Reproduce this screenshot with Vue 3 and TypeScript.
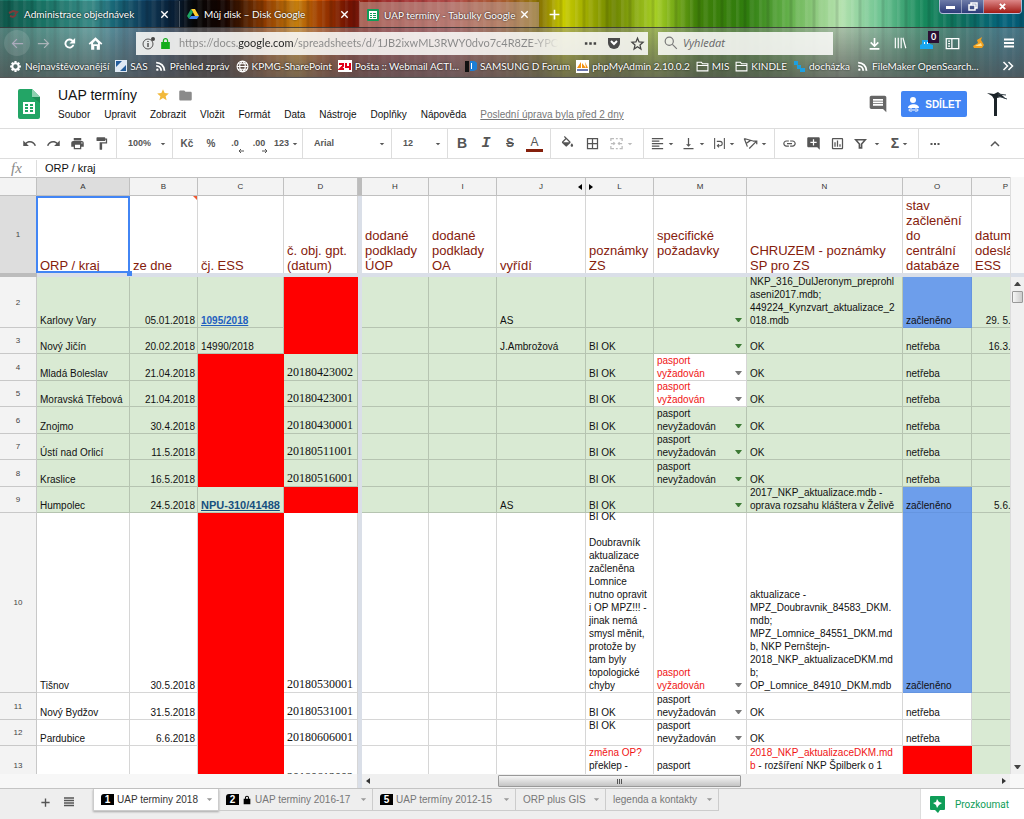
<script setup lang="ts">
import { h, ref } from 'vue'
import type { FunctionalComponent } from 'vue'

const fills: Record<string, string> = {
  undo: 'M12.5 8c-2.65 0-5.05.99-6.9 2.6L2 7v9h9l-3.62-3.62c1.39-1.16 3.16-1.88 5.12-1.88 3.54 0 6.55 2.31 7.6 5.5l2.37-.78C21.08 11.03 17.15 8 12.5 8z',
  redo: 'M18.4 10.6C16.55 8.99 14.15 8 11.5 8c-4.65 0-8.58 3.03-9.96 7.22L3.9 16c1.05-3.19 4.05-5.5 7.6-5.5 1.95 0 3.73.72 5.12 1.88L13 16h9V7l-3.6 3.6z',
  print: 'M19 8H5c-1.66 0-3 1.34-3 3v6h4v4h12v-4h4v-6c0-1.66-1.34-3-3-3zm-3 11H8v-5h8v5zm3-7c-.55 0-1-.45-1-1s.45-1 1-1 1 .45 1 1-.45 1-1 1zm-1-9H6v4h12V3z',
  paint: 'M18 4V3c0-.55-.45-1-1-1H5c-.55 0-1 .45-1 1v4c0 .55.45 1 1 1h12c.55 0 1-.45 1-1V6h1v4H9v11c0 .55.45 1 1 1h2c.55 0 1-.45 1-1v-9h8V4h-3z',
  fill: 'M16.56 8.94L7.62 0 6.21 1.41l2.38 2.38-5.15 5.15c-.59.59-.59 1.54 0 2.12l5.5 5.5c.29.29.68.44 1.06.44s.77-.15 1.06-.44l5.5-5.5c.59-.58.59-1.53 0-2.12zM19 11.5s-2 2.17-2 3.5c0 1.1.9 2 2 2s2-.9 2-2c0-1.33-2-3.5-2-3.5zM5.21 10L10 5.21 14.79 10H5.21z',
  borders: 'M3 3v18h18V3H3zm8 16H5v-6h6v6zm0-8H5V5h6v6zm8 8h-6v-6h6v6zm0-8h-6V5h6v6z',
  left: 'M15 15H3v2h12v-2zm0-8H3v2h12V7zM3 13h18v-2H3v2zm0 8h18v-2H3v2zM3 3v2h18V3H3z',
  bottom: 'M16 13h-3V3h-2v10H8l4 4 4-4zM4 19v2h16v-2H4z',
  link: 'M3.9 12c0-1.71 1.39-3.1 3.1-3.1h4V7H7c-2.76 0-5 2.24-5 5s2.24 5 5 5h4v-1.9H7c-1.71 0-3.1-1.39-3.1-3.1zM8 13h8v-2H8v2zm9-6h-4v1.9h4c1.71 0 3.1 1.39 3.1 3.1s-1.39 3.1-3.1 3.1h-4V17h4c2.76 0 5-2.24 5-5s-2.24-5-5-5z',
  addNote: 'M22 4c0-1.1-.9-2-2-2H4c-1.1 0-2 .9-2 2v12c0 1.1.9 2 2 2h14l4 4V4zm-5 7h-4v4h-2v-4H7V9h4V5h2v4h4v2z',
  chart: 'M9 17H7v-7h2v7zm4 0h-2V7h2v10zm4 0h-2v-4h2v4zm2 2H5V5h14v14zm0-16H5c-1.1 0-2 .9-2 2v14c0 1.1.9 2 2 2h14c1.1 0 2-.9 2-2V5c0-1.1-.9-2-2-2z',
  more: 'M3 10h4v4H3zM10 10h4v4h-4zM17 10h4v4h-4z',
  comment: 'M22 4c0-1.1-.89-2-2-2H4c-1.1 0-2 .9-2 2v12c0 1.1.9 2 2 2h14l4 4V4zM18 14H6v-2h12v2zm0-3H6V9h12v2zm0-3H6V6h12v2z',
  star: 'M12 17.27L18.18 21l-1.64-7.03L22 9.24l-7.19-.61L12 2 9.19 8.63 2 9.24l5.46 4.73L5.82 21z',
  folder: 'M10 4H4c-1.1 0-2 .9-2 2v12c0 1.1.9 2 2 2h16c1.1 0 2-.9 2-2V8c0-1.1-.9-2-2-2h-8l-2-2z',
  rss: 'M6.2 15.6a2.2 2.2 0 1 1 0 4.4 2.2 2.2 0 0 1 0-4.4M4 3A17 17 0 0 1 21 20h-3.4A13.6 13.6 0 0 0 4 6.4V3m0 6a11 11 0 0 1 11 11h-3.4A7.6 7.6 0 0 0 4 12.4V9z',
  lock: 'M18 9h-1V7c0-2.76-2.24-5-5-5S7 4.24 7 7v2H4v13h16V9zM9.3 7a2.7 2.7 0 0 1 5.4 0v2H9.3z',
  reload: 'M17.65 6.35A8 8 0 1 0 19.73 14h-3.1A5 5 0 1 1 15.5 8.5L12 12h9V3z',
  home: 'M12 2L1 12l2 2 2-2v10h5v-6h4v6h5V12l2 2 2-2zM12 7l4 4v8h0v-6H8v6h0v-8z',
  caret: 'M3 8h18l-9 9z',
}
const strokes: Record<string, string> = {
  merge: 'M3 8V4h5M11 4h3M17 4h4v4M3 16v4h5M11 20h3M17 20h4v-4M3 12h6M15 12h6M7 10l2 2-2 2M17 10l-2 2 2 2',
  wrap: 'M3 2v20M21 2v20M7 8h6a4 4 0 0 1 0 8H8M11 13l-3 3 3 3',
  rotate: 'M2 4l14 4M2 4l5 13M12 7l-7 5M10 20L21 9M16 8h6v5',
  filter: 'M3 5h18l-7 8v7h-4v-7z',
  up: 'M4 16l8-8 8 8',
  close: 'M5 5l14 14M19 5L5 19',
  plus: 'M12 3v18M3 12h18',
  back: 'M21 12H4M11 5l-7 7 7 7',
  forward: 'M3 12h17M13 5l7 7-7 7',
  download: 'M12 2v15M5 10l7 7 7-7M3 22h18',
  library: 'M4 3v18M9 3v18M14 3v18M17 3l5 18',
  sidebar: 'M2 4h20v16H2zM11 4v16M5 8h3M5 12h3M5 16h3',
  menu: 'M2 5h20M2 12h20M2 19h20',
  starOutline: 'M12 17.300L17.500 21l-1.500-6.500L21 10l-6.500-.6L12 3.500 9.500 9.400 3 10l5 4.500L6.500 21z',
  folderOutline: 'M2 20V4h8l2 3h10v13zM2 10h20',
  globe: 'M12 2a10 10 0 1 0 0 20 10 10 0 0 0 0-20M2 12h20M12 2c-7 5-7 15 0 20M12 2c7 5 7 15 0 20M4 7h16M4 17h16',
  search: 'M9 2a7 7 0 1 0 0 14A7 7 0 0 0 9 2M14 14l8 8',
  chevrons: 'M3 4l8 8-8 8M13 4l8 8-8 8',
  gear: 'M12 6a6 6 0 1 0 0 12 6 6 0 0 0 0-12M12 2v4M12 18v4M2 12h4M18 12h4M5 5l3 3M16 16l3 3M19 5l-3 3M8 16l-3 3',
  list: 'M2 4h20M2 9h20M2 14h20M2 19h20',
}

const Icon: FunctionalComponent<{ name: string; size?: number; weight?: number }> = (props) => {
  const size = props.size ?? 15
  const stroked = props.name in strokes
  return h('svg', { width: size, height: size, viewBox: '0 0 24 24', 'aria-hidden': 'true' }, [
    h('path', stroked
      ? { d: strokes[props.name], fill: 'none', stroke: 'currentColor', 'stroke-width': props.weight ?? 2 }
      : { d: fills[props.name], fill: 'currentColor', 'fill-rule': 'evenodd' }),
  ])
}
Icon.props = ['name', 'size', 'weight']

const url = ref('https://docs.google.com/spreadsheets/d/1JB2ixwML3RWY0dvo7c4R8ZE-YPC')
const query = ref('')
const formula = ref('ORP / kraj')
const zoomLevel = ref('100%')
const family = ref('Arial')
const fontSize = ref('12')

const bookmarks = [
  { icon: 'gear', label: 'Nejnavštěvovanější' },
  { icon: 'sas', label: 'SAS' },
  { icon: 'rss', label: 'Přehled zpráv' },
  { icon: 'globe', label: 'KPMG-SharePoint' },
  { icon: 'mail', label: 'Pošta :: Webmail ACTI...' },
  { icon: 'forum', label: 'SAMSUNG D Forum' },
  { icon: 'pma', label: 'phpMyAdmin 2.10.0.2' },
  { icon: 'folderOutline', label: 'MIS' },
  { icon: 'folderOutline', label: 'KINDLE' },
  { icon: 'steps', label: 'docházka' },
  { icon: 'rss', label: 'FileMaker OpenSearch...' },
]
const menus = ['Soubor', 'Upravit', 'Zobrazit', 'Vložit', 'Formát', 'Data', 'Nástroje', 'Doplňky', 'Nápověda']

const columns = ['A', 'B', 'C', 'D', '', 'H', 'I', 'J', 'L', 'M', 'N', 'O', 'P']
const headings = [
  'ORP / kraj', 'ze dne', 'čj. ESS', 'č. obj. gpt.\n(datum)', '', 'dodané\npodklady\nÚOP', 'dodané\npodklady\nOA',
  'vyřídí', 'poznámky\nZS', 'specifické\npožadavky\n ', 'CHRUZEM - poznámky\nSP pro ZS',
  'stav\nzačlenění\ndo\ncentrální\ndatabáze', 'datum\nodeslání\nESS',
]

interface Row {
  n: number
  height: number
  town?: string
  date?: string
  ref?: string
  order?: string
  who?: string
  note?: string
  need?: string
  text: string
  lead?: string
  state?: string
  sent?: string
}
const no = 'pasport\nnevyžadován'
const yes = 'pasport\nvyžadován'
const rows: Row[] = [
  { n: 2, height: 51, town: 'Karlovy Vary', date: '05.01.2018', ref: '1095/2018', who: 'AS', text: 'NKP_316_DulJeronym_preprohl\naseni2017.mdb;\n449224_Kynzvart_aktualizace_2\n018.mdb', state: 'začleněno', sent: '29. 5.2018' },
  { n: 3, height: 26, town: 'Nový Jičín', date: '20.02.2018', ref: '14990/2018', who: 'J.Ambrožová', note: 'BI OK', text: 'OK', state: 'netřeba', sent: '16.3.2018' },
  { n: 4, height: 27, town: 'Mladá Boleslav', date: '21.04.2018', order: '20180423002', note: 'BI OK', need: yes, text: 'OK', state: 'netřeba' },
  { n: 5, height: 26, town: 'Moravská Třebová', date: '21.04.2018', order: '20180423001', note: 'BI OK', need: yes, text: 'OK', state: 'netřeba' },
  { n: 6, height: 27, town: 'Znojmo', date: '30.4.2018', order: '20180430001', note: 'BI OK', need: no, text: 'OK', state: 'netřeba' },
  { n: 7, height: 26, town: 'Ústí nad Orlicí', date: '11.5.2018', order: '20180511001', note: 'BI OK', need: no, text: 'OK', state: 'netřeba' },
  { n: 8, height: 27, town: 'Kraslice', date: '16.5.2018', order: '20180516001', note: 'BI OK', need: no, text: 'OK', state: 'netřeba' },
  { n: 9, height: 26, town: 'Humpolec', date: '24.5.2018', ref: 'NPU-310/41488', who: 'AS', note: 'BI OK', text: '2017_NKP_aktualizace.mdb -\noprava rozsahu kláštera v Želivě', state: 'začleněno', sent: '5.6.2018' },
  { n: 10, height: 180, town: 'Tišnov', date: '30.5.2018', order: '20180530001', note: 'BI OK\n \nDoubravník\naktualizace\nzačleněna\nLomnice\nnutno opravit\ni OP MPZ!!! -\njinak nemá\nsmysl měnit,\nprotože by\ntam byly\ntopologické\nchyby', need: yes, text: 'aktualizace -\nMPZ_Doubravnik_84583_DKM.\nmdb;\nMPZ_Lomnice_84551_DKM.md\nb, NKP Pernštejn-\n2018_NKP_aktualizaceDKM.md\nb;\nOP_Lomnice_84910_DKM.mdb', state: 'začleněno' },
  { n: 11, height: 27, town: 'Nový Bydžov', date: '31.5.2018', order: '20180531001', note: 'BI OK', need: no, text: 'OK', state: 'netřeba' },
  { n: 12, height: 26, town: 'Pardubice', date: '6.6.2018', order: '20180606001', note: 'BI OK\n ', need: no, text: 'OK', state: 'netřeba' },
  { n: 13, height: 40, order: '20180612002', lead: 'změna OP?', note: 'překlep -\n ', need: 'pasport\n ', text: ' - rozšíření NKP Špilberk o 1\n ' },
]
const isLink = (r: Row) => r.n === 2 || r.n === 9

const sheets = [
  { badge: '1', label: 'UAP terminy 2018', cls: 'tab-1' },
  { badge: '2', label: 'UAP terminy 2016-17', cls: 'tab-2', locked: true },
  { badge: '5', label: 'UAP termíny 2012-15', cls: 'tab-3' },
  { label: 'ORP plus GIS', cls: 'tab-4' },
  { label: 'legenda a kontakty', cls: 'tab-5' },
]
</script>

<template>
  <div class="app">
    <header class="browser">
      <div class="strip">
        <div class="btab dim">
          <svg class="fav" viewBox="0 0 12 12"><path d="M2 5l4-2 4 1-2 2M3 8l3 1 3-2" fill="none" stroke="#7d3a3a" stroke-width="2" /></svg>
          <span>Administrace objednávek</span>
          <button aria-label="Zavřít"><Icon name="close" :size="11" :weight="3" /></button>
        </div>
        <div class="btab drive">
          <svg class="fav" viewBox="0 0 12 12"><path d="M4 1h4l4 7H8z" fill="#fc3" /><path d="M4 1L0 8l2 3 4-7z" fill="#1da462" /><path d="M2 11l2-3h8l-2 3z" fill="#4587f4" /></svg>
          <span>Můj disk – Disk Google</span>
          <button aria-label="Zavřít"><Icon name="close" :size="11" :weight="3" /></button>
        </div>
        <div class="btab active">
          <svg class="fav" viewBox="0 0 12 12"><rect width="12" height="12" rx="1" fill="#0f9d58" /><path d="M2 2h8v8H2zM3 4v1h2V4zM6 4v1h3V4zM3 6v1h2V6zM6 6v1h3V6zM3 8v1h2V8zM6 8v1h3V8z" fill="#fff" fill-rule="evenodd" /></svg>
          <span>UAP termíny - Tabulky Google</span>
          <button aria-label="Zavřít"><Icon name="close" :size="11" :weight="3" /></button>
        </div>
        <button class="newtab" aria-label="Nový panel"><Icon name="plus" :size="13" :weight="3" /></button>
        <div class="winctl">
          <button aria-label="Minimalizovat"><svg width="10" height="8"><rect x="0" y="3" width="9" height="3" fill="#fff" /></svg></button>
          <button aria-label="Obnovit"><svg width="10" height="9"><path d="M3 3V1h6v5H7M1 3h6v5H1z" fill="none" stroke="#fff" stroke-width="1.500" /></svg></button>
          <button class="x" aria-label="Zavřít okno"><Icon name="close" :size="9" :weight="5" /></button>
        </div>
      </div>
      <div class="chrome">
        <div class="nav">
          <button class="round" aria-label="Zpět"><Icon name="back" :size="15" /></button>
          <button class="faded" aria-label="Vpřed"><Icon name="forward" :size="15" /></button>
          <button aria-label="Obnovit stránku"><Icon name="reload" :size="15" /></button>
          <button aria-label="Domů"><Icon name="home" :size="15" /></button>
          <label class="urlbox">
            <svg width="13" height="13" viewBox="0 0 13 13"><circle cx="6" cy="7" r="5" fill="none" stroke="#555" /><path d="M6 6v4M6 4v1" stroke="#555" stroke-width="1.500" /><circle cx="11" cy="2" r="2" fill="#444" /></svg>
            <Icon class="green" name="lock" :size="13" />
            <input v-model="url" aria-label="Adresa">
            <Icon name="more" :size="15" />
            <svg width="14" height="13" viewBox="0 0 14 13"><path d="M1 1h12v5a6 6 0 0 1-12 0z" fill="#4a4a4a" /><path d="M4 4l3 3 3-3" fill="none" stroke="#fff" stroke-width="2" /></svg>
            <Icon name="starOutline" :size="15" />
          </label>
          <label class="searchbox">
            <Icon name="search" :size="14" />
            <input v-model="query" placeholder="Vyhledat" aria-label="Vyhledat">
          </label>
          <div class="tools">
            <button aria-label="Stahování"><Icon name="download" :size="13" :weight="3" /></button>
            <button aria-label="Knihovna"><Icon name="library" :size="14" :weight="2" /></button>
            <button class="ghost" aria-label="Doplněk"><svg width="13" height="11" viewBox="0 0 13 11"><path d="M0 11V7l2-1V2h8v4l3 1v4z" fill="#19a7f0" /><path d="M4 4h1v2H4zM7 4h1v2H7z" fill="#fff" /></svg><span class="count">0</span></button>
            <button aria-label="Postranní lišta"><Icon name="sidebar" :size="15" /></button>
            <button aria-label="Přepínač proxy"><svg width="13" height="12" viewBox="0 0 13 12"><path d="M1 9l5-3-1-3 5-3-1 3 3 5-2 3H2z" fill="#f0a020" /><path d="M3 9l6-3 1 3z" fill="#ffe08a" /></svg></button>
            <button aria-label="Nabídka"><Icon name="menu" :size="12" :weight="4" /></button>
          </div>
        </div>
        <nav class="bookmarks">
          <a v-for="b in bookmarks" :key="b.label" href="#">
            <svg v-if="b.icon === 'sas'" width="12" height="12"><rect width="12" height="12" fill="#dfeaf5" /><path d="M1 1h6L1 7zM11 5v6H5z" fill="#235d9b" /></svg>
            <svg v-else-if="b.icon === 'mail'" width="14" height="12"><rect width="14" height="12" fill="#fff" /><path d="M1 4h4v2L2 9h4M8 3v4h4M12 3v7" fill="none" stroke="#e2001a" stroke-width="2" /></svg>
            <svg v-else-if="b.icon === 'forum'" width="12" height="12"><rect width="4" height="12" y="1" fill="#111" /><path d="M5 1h3a5 5 0 0 1 0 10H5z" fill="#1c7ed6" /><path d="M6 3h1v6H6z" fill="#fff" /></svg>
            <svg v-else-if="b.icon === 'pma'" width="13" height="13"><rect width="13" height="13" fill="#fff" /><path d="M1 8l4-6v6zM6 8V3l4 5zM9 2l3 6h-2z" fill="#f29111" /><path d="M1 10h11" stroke="#6c78af" stroke-width="2" /></svg>
            <svg v-else-if="b.icon === 'steps'" width="13" height="13"><path d="M1 1h4v4h3v3h4v4H7V9H4V5H1z" fill="#1d9fe0" /></svg>
            <Icon v-else :name="b.icon" :size="13" :weight="b.icon === 'gear' ? 4 : 2" />
            <span>{{ b.label }}</span>
          </a>
          <button class="overflow" aria-label="Další záložky"><Icon name="chevrons" :size="12" :weight="3" /></button>
        </nav>
      </div>
    </header>

    <section class="dochead">
      <svg class="logo" width="22" height="30" viewBox="0 0 22 30"><path d="M2 0h12l8 8v20a2 2 0 0 1-2 2H2a2 2 0 0 1-2-2V2a2 2 0 0 1 2-2z" fill="#23a566" /><path d="M14 0l8 8h-8z" fill="#8ed1b1" /><path d="M14 8h8v6z" fill="#1c8f57" /><path d="M5 13h12v12H5zM7 15v2h3v-2zM12 15v2h3v-2zM7 18v2h3v-2zM12 18v2h3v-2zM7 21v2h3v-2zM12 21v2h3v-2z" fill="#fff" fill-rule="evenodd" /></svg>
      <div class="titles">
        <div class="titleline">
          <h1>UAP termíny</h1>
          <button class="fav-star" aria-label="Hvězdička"><Icon name="star" :size="14" /></button>
          <button class="fav-folder" aria-label="Přesunout"><Icon name="folder" :size="15" /></button>
        </div>
        <nav class="menus">
          <button v-for="m in menus" :key="m">{{ m }}</button>
          <a href="#">Poslední úprava byla před 2 dny</a>
        </nav>
      </div>
      <button class="comments" aria-label="Komentáře"><Icon name="comment" :size="20" /></button>
      <button class="share">
        <svg width="13" height="15" viewBox="0 0 13 15"><circle cx="6" cy="3" r="3" fill="#fff" /><path d="M1 11c0-5 11-5 11 0z" fill="#fff" /><path d="M5 12H3a1 1 0 0 0 0 2h2M8 12h2a1 1 0 0 1 0 2H8M5 13h3" fill="none" stroke="#fff" /></svg>
        SDÍLET
      </button>
      <svg class="avatar" width="22" height="26" viewBox="0 0 22 26"><path d="M1 2l7 1 4-2 5 4 3 3-5-2-4 1v18H8V8L6 5z" fill="#1c2429" /><path d="M12 3l8 1M12 5l9 3" stroke="#39454c" /></svg>
    </section>

    <section class="toolbar" aria-label="Panel nástrojů">
      <div class="group g1">
        <button aria-label="Zpět"><Icon name="undo" /></button>
        <button aria-label="Znovu"><Icon name="redo" /></button>
        <button aria-label="Tisk"><Icon name="print" /></button>
        <button aria-label="Kopírovat formát"><Icon name="paint" /></button>
      </div>
      <div class="group g2 pick"><select v-model="zoomLevel" aria-label="Lupa"><option>100%</option></select><Icon name="caret" :size="6" /></div>
      <div class="group g3">
        <button>Kč</button><button>%</button>
        <button class="dec">.0<svg width="6" height="4"><path d="M6 2H1M3 0L1 2l2 2" fill="none" stroke="#555" /></svg></button>
        <button class="dec">.00<svg width="6" height="4"><path d="M0 2h5M3 0l2 2-2 2" fill="none" stroke="#555" /></svg></button>
        <button class="num">123<Icon name="caret" :size="6" /></button>
      </div>
      <div class="group g4 pick"><select v-model="family" aria-label="Písmo"><option>Arial</option></select><Icon name="caret" :size="6" /></div>
      <div class="group g5 pick"><select v-model="fontSize" aria-label="Velikost písma"><option>12</option></select><Icon name="caret" :size="6" /></div>
      <div class="group g6">
        <button class="glyph">B</button><button class="glyph it">I</button><button class="glyph st">S</button><button class="glyph col">A</button>
      </div>
      <div class="group g7">
        <button aria-label="Barva výplně"><Icon name="fill" /></button>
        <button aria-label="Ohraničení"><Icon name="borders" /></button>
        <button class="off drop" aria-label="Sloučit buňky"><Icon name="merge" /><Icon name="caret" :size="6" /></button>
      </div>
      <div class="group g8">
        <button class="drop" aria-label="Vodorovné zarovnání"><Icon name="left" /><Icon name="caret" :size="6" /></button>
        <button class="drop" aria-label="Svislé zarovnání"><Icon name="bottom" /><Icon name="caret" :size="6" /></button>
        <button class="drop" aria-label="Zalamování textu"><Icon name="wrap" :size="13" /><Icon name="caret" :size="6" /></button>
        <button class="drop" aria-label="Otočení textu"><Icon name="rotate" /><Icon name="caret" :size="6" /></button>
      </div>
      <div class="group g9">
        <button aria-label="Odkaz"><Icon name="link" /></button>
        <button aria-label="Komentář"><Icon name="addNote" /></button>
        <button aria-label="Graf"><Icon name="chart" /></button>
        <button class="drop wide" aria-label="Filtr"><Icon name="filter" :size="13" :weight="3" /><Icon name="caret" :size="6" /></button>
        <button class="drop glyph" aria-label="Funkce"><span>Σ</span><Icon name="caret" :size="6" /></button>
      </div>
      <div class="group g10"><button aria-label="Více"><Icon name="more" :size="12" /></button></div>
      <button class="collapse" aria-label="Skrýt nabídky"><Icon name="up" :size="12" :weight="3" /></button>
    </section>

    <label class="fx"><span>fx</span><input v-model="formula" aria-label="Vzorec"></label>

    <main class="sheet">
      <div class="view">
        <table>
          <colgroup>
            <col class="wh"><col class="wa"><col class="wb"><col class="wc"><col class="wd"><col class="wf"><col class="wi"><col class="wb"><col class="wj"><col class="wb"><col class="wa"><col class="wn"><col class="wo"><col>
          </colgroup>
          <thead>
            <tr class="letters">
              <td class="corner"></td>
              <th v-for="(c, i) in columns" :key="i" :class="{ sel: c === 'A', split: c === '' }" scope="col">
                {{ c }}
                <button v-if="c === 'J'" class="hid right" aria-label="Zobrazit sloupec K"><svg width="4" height="6"><path d="M4 0v6L0 3z" /></svg></button>
                <button v-if="c === 'L'" class="hid left" aria-label="Zobrazit sloupec K"><svg width="4" height="6"><path d="M0 0v6l4-3z" /></svg></button>
              </th>
            </tr>
            <tr class="heads">
              <th class="rownum sel" scope="row">1</th>
              <td v-for="(t, i) in headings" :key="i" :class="{ split: i === 4, picked: i === 0, noted: i === 1 }"><div class="cell">{{ t }}</div></td>
            </tr>
            <tr class="freeze"><td class="corner-dark"></td><td :colspan="13"></td></tr>
          </thead>
          <tbody>
            <tr v-for="r in rows" :key="r.n" :class="{ green: r.n < 10 }" :style="{ '--h': r.height + 'px' }">
              <th class="rownum" scope="row">{{ r.n }}</th>
              <td><div class="cell">{{ r.town }}</div></td>
              <td><div class="cell end">{{ r.date }}</div></td>
              <td :class="{ red: !r.ref }"><div class="cell"><a v-if="isLink(r)" href="#" :class="{ big: r.n === 9 }">{{ r.ref }}</a><span v-else>{{ r.ref }}</span></div></td>
              <td :class="{ red: !r.order }"><div class="cell serif">{{ r.order }}</div></td>
              <td class="split"></td>
              <td></td>
              <td></td>
              <td><div class="cell">{{ r.who }}</div></td>
              <td><div class="cell"><span v-if="r.lead" class="warn">{{ r.lead }}</span><span>{{ r.note }}</span></div></td>
              <td :class="{ plain: r.n === 4 || r.n === 5 }">
                <div class="cell" :class="{ warn: r.need === yes }">{{ r.need }}</div>
                <button v-if="r.n < 13" class="choose" aria-label="Vybrat hodnotu"><svg width="7" height="4"><path d="M0 0h7L4 4H3z" fill="currentColor" /></svg></button>
              </td>
              <td>
                <div v-if="r.n === 13" class="cell"><span class="warn">2018_NKP_aktualizaceDKM.md</span><div class="mixed"><span class="warn">b</span><span>{{ r.text }}</span></div></div>
                <div v-else class="cell">{{ r.text }}</div>
              </td>
              <td :class="{ blue: r.state === 'začleněno', red: !r.state }"><div class="cell">{{ r.state }}</div></td>
              <td class="sent"><div class="cell end">{{ r.sent }}</div></td>
            </tr>
          </tbody>
        </table>
      </div>
      <div class="rail">
        <div class="vbar">
          <svg width="7" height="4"><path d="M0 4h7L4 0H3z" fill="#444" /></svg>
          <span class="vthumb"></span>
          <svg class="down" width="7" height="4"><path d="M0 0h7L4 4H3z" fill="#444" /></svg>
        </div>
      </div>
    </main>

    <div class="hrow">
      <div class="hblank"></div>
      <div class="hbar">
        <svg width="4" height="6"><path d="M4 0v6L0 3z" fill="#333" /></svg>
        <span class="hthumb"><i></i><i></i><i></i></span>
        <svg class="toend" width="4" height="6"><path d="M0 0v6l4-3z" fill="#333" /></svg>
      </div>
      <div class="hcorner"></div>
    </div>

    <footer class="tabs">
      <button class="act" aria-label="Přidat list"><Icon name="plus" :size="11" :weight="3" /></button>
      <button class="act" aria-label="Všechny listy"><Icon name="list" :size="12" :weight="3" /></button>
      <button v-for="(s, i) in sheets" :key="s.label" class="tab" :class="[s.cls, { on: i === 0 }]">
        <span v-if="s.badge" class="badge">{{ s.badge }}</span>
        <Icon v-if="s.locked" class="locked" name="lock" :size="10" />
        <span>{{ s.label }}</span>
        <Icon class="arrow" name="caret" :size="7" />
      </button>
      <button class="explore">
        <svg width="15" height="17" viewBox="0 0 15 17"><path d="M1 0h13a1 1 0 0 1 1 1v12a1 1 0 0 1-1 1h-4l-2 3-3-3H1a1 1 0 0 1-1-1V1a1 1 0 0 1 1-1z" fill="#0f9d58" /><path d="M7 3l2 3 3 1-3 2-2 3-1-3-3-2 3-1z" fill="#fff" /></svg>
        Prozkoumat
      </button>
    </footer>
  </div>
</template>

<style>
html, body { margin: 0; }
</style>

<style scoped>
* { box-sizing: border-box; }
.app { display: flex; flex-direction: column; height: 100vh; overflow: hidden; background: #fff; color: #111; font: 10px/13px "Liberation Sans", Arial, sans-serif; }
button { border: 0; padding: 0; margin: 0; background: none; color: inherit; font: inherit; display: flex; align-items: center; justify-content: center; flex: none; }
input, select { border: 0; padding: 0; margin: 0; background: none; color: inherit; font: inherit; outline: 0; min-width: 0; appearance: none; }
svg { display: block; flex: none; }

/* browser */
.browser {
  flex: none; color: #fff; font: 10px/14px Lato, "Open Sans", sans-serif; text-shadow: 0 0 2px #000;
  background:
    repeating-linear-gradient(90deg, rgba(255,255,255,.08) 0 2px, transparent 4px 7px, rgba(0,0,0,.1) 8px 10px, transparent 11px 13px, rgba(255,255,255,.07) 14px 17px, transparent 19px 23px),
    linear-gradient(90deg, #12695a 0, #1d8a78 4%, #46a8a4 9%, #1f7f92 11%, #134a6e 14%, #0a2440 17%, #080808 19%, #1a0500 22%, #b04a00 26%, #ef9a10 29%, #c85000 31%, #8a1500 34%, #a03030 38%, #b04a48 44%, #a85a30 49%, #8a7a00 53%, #c9cc00 55%, #6d8500 60%, #a6cf24 64%, #3f7f08 68%, #2f7d0e 73%, #63b04a 77%, #b5e2ae 82%, #6fc493 86%, #188a5c 90%, #0c6c5c 94%, #05637c 98%, #04566e 100%);
}
.strip { display: flex; height: 27px; align-items: flex-end; }
.btab { display: flex; align-items: center; height: 26px; padding: 0 9px 0 7px; width: 180px; background: rgba(0,0,0,.18); border-right: 1px solid rgba(255,255,255,.25); }
.btab .fav { width: 12px; height: 12px; margin-right: 5px; }
.btab span { flex: 1; white-space: nowrap; }
.btab.active { background: rgba(190,160,150,.55); height: 25px; width: 179px; border: 0; }
.newtab { width: 30px; height: 26px; }
.winctl { margin-left: auto; margin-right: 2px; align-self: flex-start; display: flex; height: 14px; border: 1px solid rgba(230,240,255,.6); border-top: 0; border-radius: 0 0 4px 4px; background: linear-gradient(#6d7ba8, #2c3b78); overflow: hidden; }
.winctl button { width: 22px; border-right: 1px solid rgba(255,255,255,.4); }
.winctl .x { width: 37px; border: 0; background: linear-gradient(#d88, #a11a14); }
.chrome { background: linear-gradient(rgba(150,150,155,.45), rgba(92,90,92,.8)); border-top: 1px solid rgba(0,0,0,.35); border-bottom: 1px solid #555; }
.nav { display: flex; align-items: center; height: 29px; padding: 1px 2px 0 4px; }
.nav > button { width: 26px; height: 26px; }
.nav .round { border-radius: 50%; background: rgba(255,255,255,.12); color: #aab; }
.nav .faded { color: #aab4b8; }
.urlbox, .searchbox { display: flex; align-items: center; gap: 5px; height: 23px; padding: 0 6px; background: rgba(250,250,248,.88); color: #444; text-shadow: none; }
.urlbox { flex: 1; margin-left: 28px; gap: 4px; padding-right: 3px; }
.urlbox > svg:nth-last-child(-n+3) { margin-left: 5px; }
.urlbox .green { color: #12ac1c; }
.urlbox input { flex: 1; margin-left: 3px; font: 11px/16px Lato, sans-serif; color: transparent; background: linear-gradient(90deg, #888 0 59px, #222 59px 114px, #888 114px 350px, rgba(136,136,136,0) 380px); background-clip: text; }
.searchbox { width: 175px; margin: 0 29px 0 10px; color: #777; }
.searchbox input { flex: 1; font: italic 11px/16px "Open Sans", sans-serif; color: #444; }
.searchbox input::placeholder { color: #666; opacity: 1; }
.tools { display: flex; gap: 2px; }
.tools button { width: 24px; height: 24px; position: relative; }
.tools button:last-child { margin-left: 4px; width: 26px; }
.count { position: absolute; right: -1px; top: 0; width: 11px; height: 12px; background: #2b0f33; font-size: 9px; line-height: 12px; font-weight: bold; }
.bookmarks { display: flex; align-items: center; height: 20px; padding: 0 10px 2px 9px; gap: 6px; }
.bookmarks a { display: flex; align-items: center; gap: 3px; color: #fff; text-decoration: none; white-space: nowrap; }
.overflow { margin-left: auto; }

/* document header */
.dochead { flex: none; display: flex; align-items: center; height: 51px; padding: 2px 16px 0 18px; border-bottom: 1px solid #ddd; }
.titles { margin-left: 18px; flex: 1; }
.titleline { display: flex; align-items: center; height: 20px; }
h1 { margin: 0; font-size: 14px; line-height: 20px; font-weight: normal; }
.fav-star { color: #f2b93b; margin-left: 19px; }
.fav-folder { color: #8a8a8a; margin-left: 8px; }
.menus { display: flex; gap: 14px; height: 18px; align-items: center; }
.menus a { color: #777; }
.comments { color: #666; }
.share { margin: 0 19px 0 13px; width: 66px; height: 26px; gap: 5px; border-radius: 2px; background: #4285f4; color: #fff; font-weight: bold; }

/* toolbar */
.toolbar { flex: none; display: flex; align-items: center; height: 30px; border-bottom: 1px solid #ddd; color: #555; font-weight: bold; }
.group { display: flex; align-items: center; height: 29px; border-right: 1px solid #ddd; flex: none; }
.group button { width: 24px; height: 24px; }
.g1 { width: 117px; padding-left: 17px; }
.g2 { width: 56px; }
.g3 { width: 130px; padding-left: 2px; }
.g4 { width: 89px; }
.g5 { width: 56px; }
.g6 { width: 103px; padding-left: 2px; }
.g7 { width: 93px; padding-left: 4px; gap: 1px; }
.g8 { width: 131px; padding-left: 2px; }
.g9 { width: 144px; padding-left: 2px; }
.g10 { padding-left: 4px; border: 0; }
.pick { padding: 0 6px 0 11px; font-size: 9px; }
.pick select { flex: 1; }
.group .num { width: 30px; font-size: 9px; gap: 3px; }
.dec { position: relative; font-size: 9px; }
.dec svg { position: absolute; right: 3px; bottom: 3px; }
.group .drop { width: 31px; gap: 3px; }
.group .drop.wide { width: 35px; gap: 7px; }
.off { color: #bbb; }
.glyph { font-size: 14px; }
.it { font-family: "Liberation Mono", monospace; font-style: italic; font-size: 15px; }
.st { text-decoration: line-through; font-size: 12px; }
.group .col { width: 17px; height: 17px; margin-left: 4px; border-bottom: 3px solid #85200c; font-size: 12px; font-weight: normal; }
.collapse { margin-left: auto; margin-right: 23px; }

/* formula line */
.fx { flex: none; display: flex; align-items: center; height: 18px; font-size: 11px; }
.fx span { width: 37px; border-right: 1px solid #ddd; padding-left: 11px; font: italic 15px/16px "Liberation Serif", serif; color: #888; }
.fx input { flex: 1; margin-left: 8px; }

/* grid */
.sheet { flex: 1; min-height: 0; display: flex; }
.view { flex: 1; min-width: 0; overflow: hidden; }
table { border-collapse: separate; border-spacing: 0; table-layout: fixed; width: 100%; min-width: 1040px; }
.wh { width: 37px; } .wa { width: 93px; } .wb { width: 68px; } .wc { width: 86px; } .wd { width: 74px; } .wf { width: 4px; }
.wi { width: 67px; } .wj { width: 89px; } .wn { width: 156px; } .wo { width: 69px; }
td, th { padding: 0; border-right: 1px solid rgba(0,0,0,.16); border-bottom: 1px solid rgba(0,0,0,.16); position: relative; font-weight: normal; }
.letters > * { height: 19px; background: #f3f3f3; border-top: 1px solid #c4c4c4; border-color: #c0c0c0; font-size: 8px; line-height: 10px; color: #333; }
.letters .split { background: #bcbcbc; border-right: 0; }
.letters .sel, .heads .sel { background: #ddd; }
.rownum { background: #f3f3f3; border-color: #c8c8c8; font-size: 8px; color: #444; }
.hid { position: absolute; top: 6px; }
.hid.right { right: 3px; }
.hid.left { left: 3px; }
.heads td, .heads th { border-bottom: 0; }
.heads .cell { height: 77px; font-size: 13px; line-height: 15px; color: #85200c; }
.heads td.split, td.split { background: #dadfe8; border: 0; }
.picked::before { content: ""; position: absolute; inset: 0 -1px 0 -1px; border: 2px solid #4285f4; }
.picked::after { content: ""; position: absolute; right: -3px; bottom: -3px; width: 5px; height: 5px; background: #4285f4; z-index: 1; }
.noted::after { content: ""; position: absolute; right: 0; top: 0; border: 2px solid #f05a32; border-left-color: transparent; border-bottom-color: transparent; }
.freeze td { height: 4px; border: 0; background: #dadfe8; }
.freeze .corner-dark { background: #bcbcbc; }
.cell { display: flex; flex-direction: column; justify-content: flex-end; height: calc(var(--h) - 1px); padding-left: 3px; white-space: pre; }
.cell.end { align-items: flex-end; padding-right: 2px; }
.sent .cell.end { padding-right: 6px; }
.mixed { display: flex; }
.green td:not(.split), td.sent { background: #d9ead3; }
.green td.red, td.red { background: #f00; border-color: #f00; }
.green td.blue, td.blue { background: #6d9eeb; border-color: #6595e0; }
.green td.plain { background: #fff; }
.serif { font: 12px/16px "Liberation Serif", serif; }
.cell a { font-weight: bold; color: #1f5fbf; }
.cell a.big { font-size: 11px; color: #16507f; }
.warn { color: #f01414; }
.choose { position: absolute; right: 4px; bottom: 5px; color: #777; }
.green td:not(.plain) .choose { color: #3d7a35; }

/* scroll bars */
.rail { width: 14px; padding-top: 96px; background: #f8f8f8; display: flex; flex-direction: column; border-left: 1px solid #ddd; }
.rail::before { content: ""; height: 4px; background: #dadfe8; flex: none; }
.vbar { flex: 1; background: #f0f0f0; display: flex; flex-direction: column; align-items: center; padding: 5px 0; }
.vthumb { width: 11px; height: 12px; margin-top: 5px; border: 1px solid #999; border-radius: 1px; background: linear-gradient(90deg, #f6f6f6, #ccc); }
.down { margin-top: auto; }
.hrow { flex: none; display: flex; height: 14px; }
.hblank { width: 358px; background: #f7f7f7; border-right: 1px solid #ddd; }
.hbar { flex: 1; display: flex; align-items: center; background: #f0f0f0; padding: 0 4px; border-left: 4px solid #dadfe8; }
.hthumb { display: flex; align-items: center; justify-content: center; gap: 1px; width: 38%; height: 12px; margin-left: 20%; border: 1px solid #999; border-radius: 1px; background: linear-gradient(#f6f6f6, #c4c4c4); }
.hthumb i { width: 1px; height: 5px; background: #555; }
.toend { margin-left: auto; }
.hcorner { width: 14px; background: #f8f8f8; }

/* sheet tabs */
.tabs { flex: none; display: flex; height: 31px; background: #eee; border-top: 1px solid #c4c4c4; padding-left: 33px; color: #777; }
.act { width: 24px; height: 26px; color: #555; }
.tab { height: 22px; padding: 0 5px 0 7px; gap: 3px; border: 1px solid #ccc; border-width: 0 1px 1px 0; justify-content: flex-start; }
.tab-1 { width: 126px; margin-left: 12px; border-left-width: 1px; }
.tab-2 { width: 154px; }
.tab-3 { width: 143px; }
.tab-4 { width: 90px; }
.tab-5 { width: 113px; }
.tab.on { background: #fff; color: #333; box-shadow: 0 1px 2px rgba(0,0,0,.3); }
.badge { width: 13px; height: 11px; background: #000; color: #fff; font-weight: bold; line-height: 11px; text-align: center; border-top-left-radius: 3px; }
.locked { color: #000; }
.arrow { margin-left: auto; color: #999; }
.explore { margin-left: auto; width: 104px; height: 30px; padding-left: 9px; gap: 10px; justify-content: flex-start; background: #fff; border-left: 1px solid #ddd; color: #0f9d58; font-family: Roboto, sans-serif; }
</style>
